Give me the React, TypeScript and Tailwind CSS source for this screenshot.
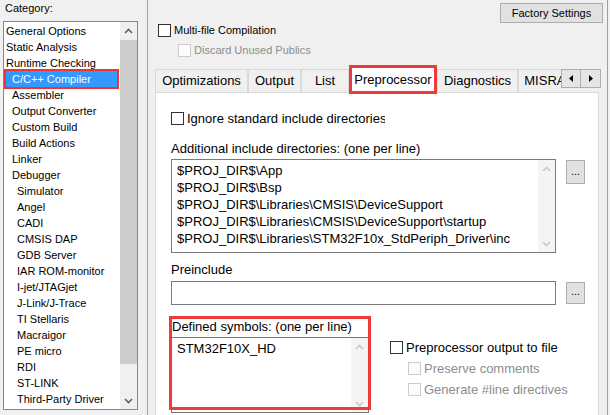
import React from 'react';

type Category = { label: string; level: number; selected?: boolean };

const CATEGORIES: Category[] = [
  { label: 'General Options', level: 0 },
  { label: 'Static Analysis', level: 0 },
  { label: 'Runtime Checking', level: 0 },
  { label: 'C/C++ Compiler', level: 1, selected: true },
  { label: 'Assembler', level: 1 },
  { label: 'Output Converter', level: 1 },
  { label: 'Custom Build', level: 1 },
  { label: 'Build Actions', level: 1 },
  { label: 'Linker', level: 1 },
  { label: 'Debugger', level: 1 },
  { label: 'Simulator', level: 2 },
  { label: 'Angel', level: 2 },
  { label: 'CADI', level: 2 },
  { label: 'CMSIS DAP', level: 2 },
  { label: 'GDB Server', level: 2 },
  { label: 'IAR ROM-monitor', level: 2 },
  { label: 'I-jet/JTAGjet', level: 2 },
  { label: 'J-Link/J-Trace', level: 2 },
  { label: 'TI Stellaris', level: 2 },
  { label: 'Macraigor', level: 2 },
  { label: 'PE micro', level: 2 },
  { label: 'RDI', level: 2 },
  { label: 'ST-LINK', level: 2 },
  { label: 'Third-Party Driver', level: 2 },
];

const INDENT = ['pl-[2px]', 'pl-[8px]', 'pl-[13px]'];

const TABS = [
  { label: 'Optimizations', w: 'w-[93px]' },
  { label: 'Output', w: 'w-[53px]' },
  { label: 'List', w: 'w-[48px]' },
  { label: 'Preprocessor', w: 'w-[88px]', active: true },
  { label: 'Diagnostics', w: 'w-[81px]' },
  { label: 'MISRA-C:2004', w: 'w-[100px]' },
];

const INCLUDE_DIRS = [
  '$PROJ_DIR$\\App',
  '$PROJ_DIR$\\Bsp',
  '$PROJ_DIR$\\Libraries\\CMSIS\\DeviceSupport',
  '$PROJ_DIR$\\Libraries\\CMSIS\\DeviceSupport\\startup',
  '$PROJ_DIR$\\Libraries\\STM32F10x_StdPeriph_Driver\\inc',
];

const Chevron = ({ up }: { up?: boolean }) => (
  <svg width="9" height="6" viewBox="0 0 9 6">
    <polyline
      points={up ? '1,5 4.5,1.5 8,5' : '1,1 4.5,4.5 8,1'}
      fill="none"
      stroke="currentColor"
      strokeWidth="1.6"
    />
  </svg>
);

const CheckBox = ({ disabled }: { disabled?: boolean }) => (
  <span
    className={`w-[13px] h-[13px] shrink-0 border ${
      disabled ? 'border-[#cccccc] bg-[#fcfcfc]' : 'border-[#333333] bg-white'
    }`}
  />
);

const DotsButton = ({ h }: { h: string }) => (
  <button
    className={`ml-[10px] mt-[1px] w-[19px] ${h} border border-[#adadad] bg-[#e1e1e1] text-[11px] leading-none flex items-end justify-center pb-[6px]`}
  >
    ...
  </button>
);

const ScrollColumn = () => (
  <div className="w-[17px] shrink-0 flex flex-col justify-between bg-[#f4f4f4] text-[#c8c8c8]">
    <div className="h-[17px] flex items-center justify-center">
      <Chevron up />
    </div>
    <div className="h-[17px] flex items-center justify-center">
      <Chevron />
    </div>
  </div>
);

export default function App() {
  return (
    <div className="w-[610px] h-[415px] overflow-hidden bg-[#f0f0f0] flex text-black font-['Liberation_Sans',Arial,sans-serif]">
      {/* category tree */}
      <div className="w-[147px] shrink-0 pl-[3px] flex flex-col">
        <div className="h-[21px] pl-[2px] text-[11px] leading-[16px]">Category:</div>
        <div className="h-[389px] w-[135px] border border-[#828790] bg-white flex">
          <div className="flex-1 pt-[1px] text-[11px]">
            {CATEGORIES.map((c) =>
              c.selected ? (
                <div key={c.label} className="h-[16px]">
                  <div className="ml-[2px] w-[111px] h-[16px] leading-[16px] pl-[6px] bg-[#3399ff] text-white outline-2 outline-[#ee3333] whitespace-nowrap">
                    {c.label}
                  </div>
                </div>
              ) : (
                <div key={c.label} className={`h-[16px] leading-[16px] whitespace-nowrap ${INDENT[c.level]}`}>
                  {c.label}
                </div>
              )
            )}
          </div>
          <div className="w-[17px] shrink-0 flex flex-col bg-[#f0f0f0] text-[#606060]">
            <div className="h-[17px] flex items-center justify-center">
              <Chevron up />
            </div>
            <div className="flex-1 pt-[1px]">
              <div className="h-[324px] bg-[#cdcdcd]" />
            </div>
            <div className="h-[17px] flex items-center justify-center">
              <Chevron />
            </div>
          </div>
        </div>
      </div>

      <div className="w-[1px] shrink-0 bg-[#a0a0a0]" />

      {/* options page */}
      <div className="w-[460px] shrink-0 h-full overflow-hidden flex flex-col border-r border-[#a0a0a0]">
        <div className="flex justify-end pt-[3px] pr-[4px]">
          <button className="w-[103px] h-[20px] border border-[#adadad] bg-[#e1e1e1] text-[11px]">
            Factory Settings
          </button>
        </div>
        <div className="h-[14px] flex items-center gap-[3px] pl-[10px] text-[11px]">
          <CheckBox />
          <span>Multi-file Compilation</span>
        </div>
        <div className="mt-[6px] h-[14px] flex items-center gap-[3px] pl-[30px] text-[11px] text-[#8d8d8d]">
          <CheckBox disabled />
          <span>Discard Unused Publics</span>
        </div>

        <div className="mt-[8px] h-[27px] shrink-0 pl-[7px] flex items-end">
          <div className="w-[406px] h-full flex items-end overflow-x-clip text-[13px]">
            {TABS.map((t) =>
              t.active ? (
                <div
                  key={t.label}
                  className={`${t.w} shrink-0 h-[29px] -mb-[2px] relative z-10 bg-white border-[3px] border-[#ee3a3a] flex items-center justify-center whitespace-nowrap`}
                >
                  {t.label}
                </div>
              ) : (
                <div
                  key={t.label}
                  className={`${t.w} shrink-0 h-[23px] border border-b-0 border-[#d9d9d9] bg-[#f0f0f0] flex items-center justify-center whitespace-nowrap`}
                >
                  {t.label}
                </div>
              )
            )}
          </div>
          <div className="self-start mt-[4px] flex">
            <div className="w-[20px] h-[19px] border border-[#adadad] bg-[#e5e5e5] flex items-center justify-center">
              <svg width="4" height="7" viewBox="0 0 4 7">
                <polygon points="4,0 0,3.5 4,7" fill="#000" />
              </svg>
            </div>
            <div className="w-[20px] h-[19px] border border-l-0 border-[#adadad] bg-[#e5e5e5] flex items-center justify-center">
              <svg width="4" height="7" viewBox="0 0 4 7">
                <polygon points="0,0 4,3.5 0,7" fill="#000" />
              </svg>
            </div>
          </div>
        </div>

        <div className="ml-[7px] w-[444px] h-[340px] shrink-0 border border-[#d9d9d9] bg-white pl-[15px] text-[13px]">
          <div className="mt-[19px] h-[13px] flex items-center gap-[3px]">
            <CheckBox />
            <span className="w-[198px] overflow-hidden whitespace-nowrap leading-[16px]">
              Ignore standard include directories
            </span>
          </div>

          <div className="mt-[16px] h-[16px] leading-[16px]">Additional include directories: (one per line)</div>
          <div className="mt-[2px] flex items-start">
            <div className="w-[385px] h-[94px] border border-[#7a7a7a] flex">
              <div className="flex-1 pl-[5px] pt-[2px] leading-[17px] whitespace-nowrap">
                {INCLUDE_DIRS.map((d) => (
                  <div key={d}>{d}</div>
                ))}
              </div>
              <ScrollColumn />
            </div>
            <DotsButton h="h-[24px]" />
          </div>

          <div className="mt-[9px] h-[16px] leading-[16px]">Preinclude</div>
          <div className="mt-[3px] flex items-start">
            <div className="w-[385px] h-[24px] border border-[#7a7a7a]" />
            <DotsButton h="h-[22px]" />
          </div>

          <div className="mt-[14px] flex items-start">
            <div className="relative w-[198px]">
              <div className="h-[16px] leading-[16px] pl-[1px] whitespace-nowrap">Defined symbols: (one per line)</div>
              <div className="mt-[2px] h-[76px] border border-[#7a7a7a] flex">
                <div className="flex-1 pl-[5px] pt-[2px] leading-[17px]">STM32F10X_HD</div>
                <ScrollColumn />
              </div>
              <div className="absolute -left-[2px] -top-[3px] w-[202px] h-[94px] border-[3px] border-[#ee3a3a] pointer-events-none" />
            </div>

            <div className="ml-[21px] mt-[22px] flex flex-col">
              <div className="h-[13px] flex items-center gap-[3px] whitespace-nowrap">
                <CheckBox />
                <span>Preprocessor output to file</span>
              </div>
              <div className="mt-[8px] h-[13px] pl-[18px] flex items-center gap-[3px] whitespace-nowrap text-[#8d8d8d]">
                <CheckBox disabled />
                <span>Preserve comments</span>
              </div>
              <div className="mt-[8px] h-[13px] pl-[18px] flex items-center gap-[3px] whitespace-nowrap text-[#8d8d8d]">
                <CheckBox disabled />
                <span>Generate #line directives</span>
              </div>
            </div>
          </div>
        </div>
      </div>
    </div>
  );
}
